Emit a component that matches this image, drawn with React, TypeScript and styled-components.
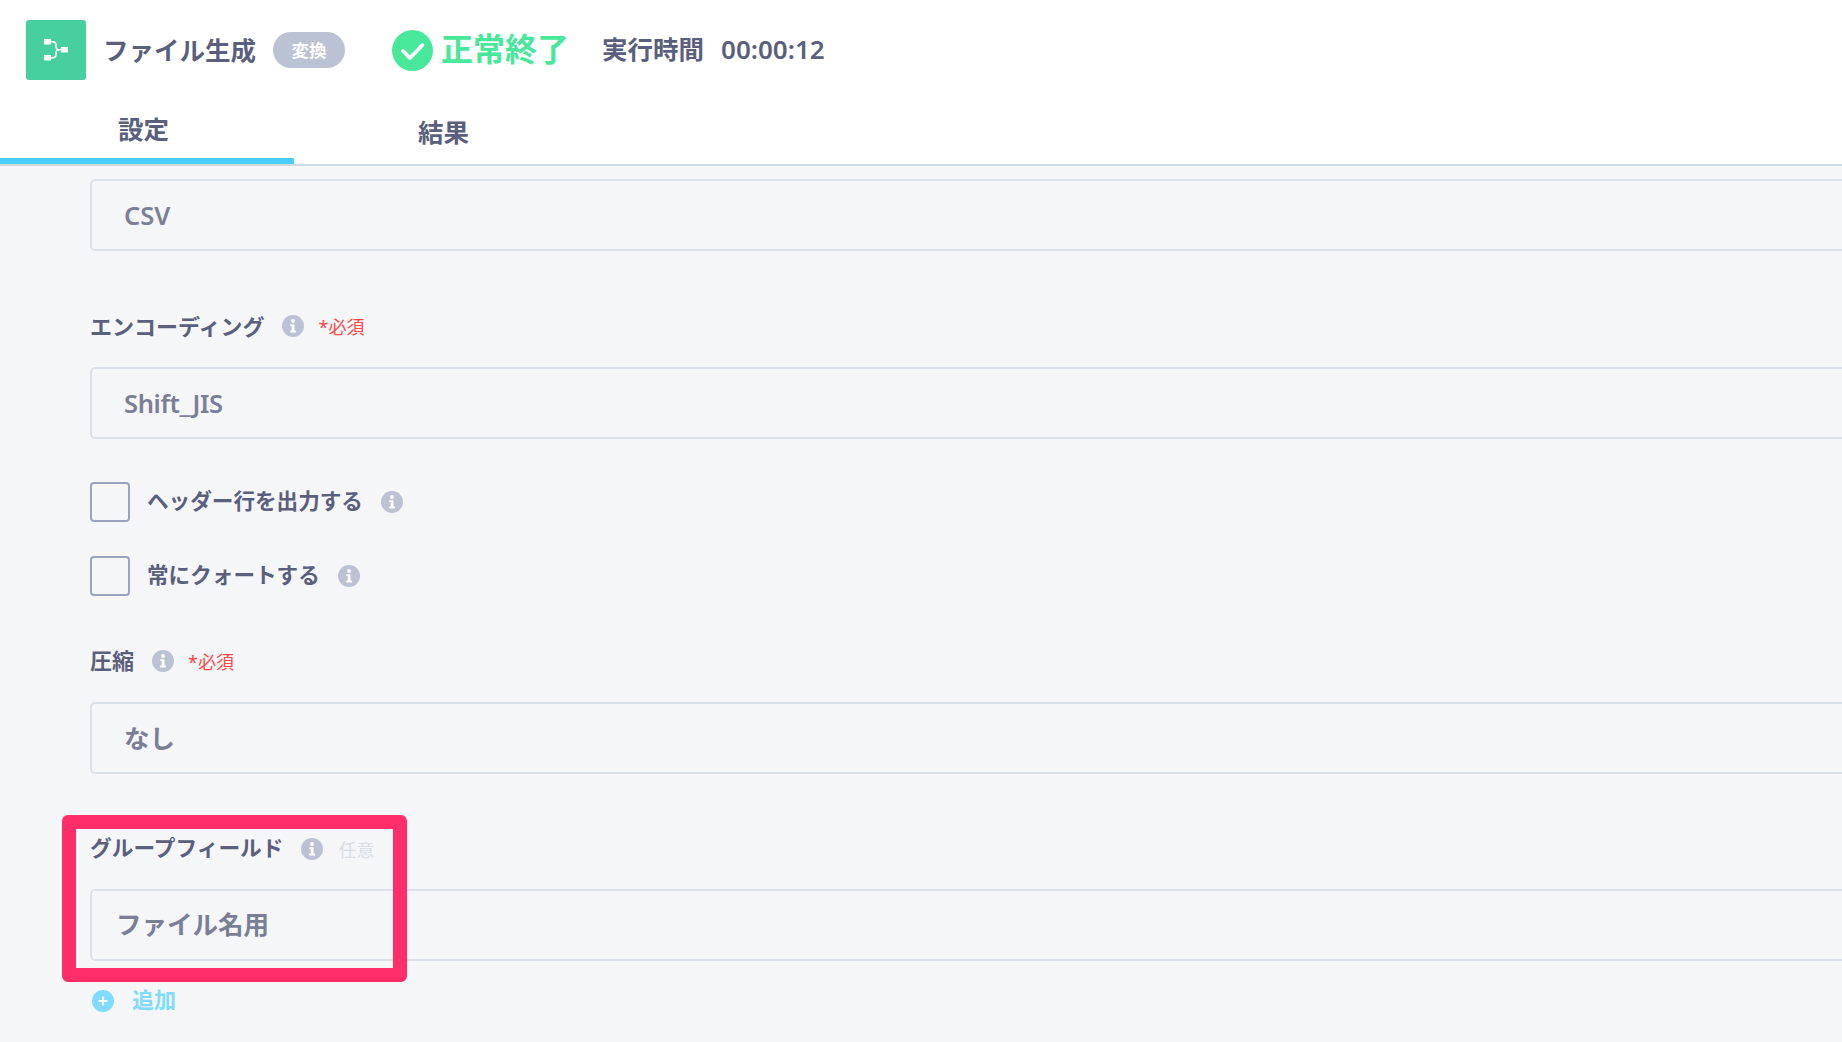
import React from "react";
import styled, { createGlobalStyle } from "styled-components";

const Global = createGlobalStyle`
  html, body { margin: 0; padding: 0; height: 100%; overflow: hidden; background: #f4f6f8; }
  * { box-sizing: border-box; }
  body { font-family: "Noto Sans", "Noto Sans CJK JP", sans-serif; color: #5a5f7d; }
`;

const Page = styled.div`
  position: relative;
  width: 1842px;
  height: 1042px;
  overflow: hidden;
  background: #f4f6f8;
`;

const Top = styled.header`
  background: #fff;
  border-bottom: 2px solid #d0d8e0;
  height: 166px;
  display: flex;
  flex-direction: column;
`;

const TitleRow = styled.div`
  display: flex;
  align-items: center;
  height: 60px;
  margin-top: 20px;
  padding-left: 26px;
`;

const AppIcon = styled.div`
  width: 60px;
  height: 60px;
  background: #48cf9f;
  border-radius: 3px;
  display: flex;
  align-items: center;
  justify-content: center;
`;

const Title = styled.span`
  margin-left: 17px;
  font-size: 25.5px;
  font-weight: 600;
  line-height: 36px;
  color: #5a5f7d;
`;

const Badge = styled.span`
  margin-left: 17px;
  width: 72px;
  height: 36px;
  border-radius: 18px;
  background: #bbc2d4;
  color: #fff;
  font-size: 17.5px;
  font-weight: 700;
  padding-bottom: 1px;
  display: flex;
  align-items: center;
  justify-content: center;
`;

const StatusIcon = styled.svg`
  margin-left: 47px;
  width: 41px;
  height: 41px;
`;

const StatusText = styled.span`
  margin-left: 8px;
  font-size: 32px;
  font-weight: 700;
  line-height: 40px;
  padding-bottom: 2px;
  color: #48e89a;
`;

const Meta = styled.span<{ $gap: number; $size: number }>`
  margin-left: ${(p) => p.$gap}px;
  font-size: ${(p) => p.$size}px;
  font-weight: 600;
  line-height: 36px;
  padding-bottom: 2px;
  color: #5a5f7d;
`;

const Tabs = styled.nav`
  display: flex;
  flex: 1;
  margin-top: 8px;
`;

const Tab = styled.div<{ $active?: boolean }>`
  width: 294px;
  display: flex;
  justify-content: ${(p) => (p.$active ? "flex-start" : "flex-end")};
  align-items: center;
  font-size: 25.5px;
  font-weight: 700;
  color: #5a5f7d;
  border-bottom: 6px solid ${(p) => (p.$active ? "#48cfff" : "transparent")};
  padding: ${(p) => (p.$active ? "8px 0 0 118px" : "14px 119px 0 0")};
`;

const Form = styled.main`
  padding: 13px 0 0 90px;
  display: flex;
  flex-direction: column;
`;

const Input = styled.div<{ $pad?: number; $top?: number; $lift?: number; $track?: number }>`
  margin-right: -20px;
  margin-top: ${(p) => p.$top ?? 0}px;
  height: 72px;
  border: 2px solid #dbe1e8;
  border-radius: 5px;
  display: flex;
  align-items: center;
  padding-left: ${(p) => p.$pad ?? 32}px;
  padding-bottom: ${(p) => p.$lift ?? 0}px;
  font-size: 25.5px;
  font-weight: 600;
  letter-spacing: ${(p) => p.$track ?? 0}px;
  color: #7a7f96;
`;

const LabelRow = styled.div<{ $top: number }>`
  margin-top: ${(p) => p.$top}px;
  height: 30px;
  display: flex;
  align-items: center;
`;

const Label = styled.span<{ $size?: number; $lift?: number }>`
  font-size: ${(p) => p.$size ?? 22}px;
  font-weight: 700;
  line-height: 30px;
  padding-bottom: ${(p) => p.$lift ?? 0}px;
  color: #5a5f7d;
`;

const Required = styled.span`
  margin-left: 14px;
  font-size: 18px;
  color: #ff4848;
`;

const Optional = styled.span`
  margin-left: 15px;
  font-size: 18px;
  color: #d8dde6;
`;

const InfoSvg = styled.svg`
  width: 22px;
  height: 22px;
  margin-left: 18px;
  flex: none;
`;

const CheckRow = styled.div<{ $top: number }>`
  margin-top: ${(p) => p.$top}px;
  height: 40px;
  display: flex;
  align-items: center;
`;

const Box = styled.div`
  width: 40px;
  height: 40px;
  border: 2px solid #9aa3bd;
  border-radius: 4px;
  margin-right: 17px;
`;

const AddRow = styled.div`
  margin-top: 29px;
  display: flex;
  align-items: center;
  height: 22px;
  padding-left: 2px;
`;

const AddText = styled.span`
  margin-left: 18px;
  font-size: 22px;
  font-weight: 700;
  line-height: 30px;
  padding-bottom: 4px;
  color: #7fdcff;
`;

const Highlight = styled.div`
  position: absolute;
  left: 62px;
  top: 815px;
  width: 345px;
  height: 167px;
  border: 14px solid #ff2e6b;
  border-radius: 6px;
  pointer-events: none;
`;

const Info = () => (
  <InfoSvg viewBox="0 0 22 22">
    <circle cx="11" cy="11" r="11" fill="#bbc2d4" />
    <circle cx="11" cy="6" r="1.9" fill="#fff" />
    <path d="M8.300 9.200h4.200v6.300h1.500v1.900H8.200v-1.900h1.500v-4.400H8.300z" fill="#fff" />
  </InfoSvg>
);

export default function App() {
  return (
    <Page>
      <Global />
      <Top>
        <TitleRow>
          <AppIcon>
            <svg width="24" height="22" viewBox="0 0 24 22" fill="none">
              <rect x="0" y="0" width="7" height="5.500" fill="#fff" />
              <rect x="0" y="16" width="7" height="5.500" fill="#fff" />
              <rect x="17" y="8" width="7" height="5.500" fill="#fff" />
              <path d="M7 2.750h1.500c2.200 0 3.500 1.300 3.500 3.500v1c0 2.200 1 3.500 3 3.500h2M7 18.750h1.500c2.200 0 3.500-1.300 3.500-3.500v-1c0-2.200 1-3.500 3-3.500" stroke="#fff" strokeWidth="1.600" />
            </svg>
          </AppIcon>
          <Title>ファイル生成</Title>
          <Badge>変換</Badge>
          <StatusIcon viewBox="0 0 41 41">
            <circle cx="20.500" cy="20.500" r="20.500" fill="#48e89a" />
            <path d="M11 21l7 7L30.500 15" stroke="#fff" strokeWidth="3.800" fill="none" strokeLinecap="round" strokeLinejoin="round" />
          </StatusIcon>
          <StatusText>正常終了</StatusText>
          <Meta $gap={33} $size={25.5}>実行時間</Meta>
          <Meta $gap={17} $size={26}>00:00:12</Meta>
        </TitleRow>
        <Tabs>
          <Tab $active>設定</Tab>
          <Tab>結果</Tab>
        </Tabs>
      </Top>
      <Form>
        <Input>CSV</Input>
        <LabelRow $top={60}>
          <Label>エンコーディング</Label>
          <Info />
          <Required>*必須</Required>
        </LabelRow>
        <Input $top={26} $track={-0.35}>Shift_JIS</Input>
        <CheckRow $top={43}>
          <Box />
          <Label $size={21.6} $lift={2}>ヘッダー行を出力する</Label>
          <Info />
        </CheckRow>
        <CheckRow $top={34}>
          <Box />
          <Label $size={21.6} $lift={2}>常にクォートする</Label>
          <Info />
        </CheckRow>
        <LabelRow $top={50}>
          <Label $lift={2}>圧縮</Label>
          <Info />
          <Required>*必須</Required>
        </LabelRow>
        <Input $top={26} $lift={4}>なし</Input>
        <LabelRow $top={60}>
          <Label $size={21.7} $lift={2}>グループフィールド</Label>
          <Info />
          <Optional>任意</Optional>
        </LabelRow>
        <Input $top={25} $pad={24} $lift={5}>ファイル名用</Input>
        <AddRow>
          <svg width="22" height="22" viewBox="0 0 22 22">
            <circle cx="11" cy="11" r="11" fill="#7fdcff" />
            <path d="M11 6.500v9M6.500 11h9" stroke="#fff" strokeWidth="2.200" />
          </svg>
          <AddText>追加</AddText>
        </AddRow>
      </Form>
      <Highlight />
    </Page>
  );
}
